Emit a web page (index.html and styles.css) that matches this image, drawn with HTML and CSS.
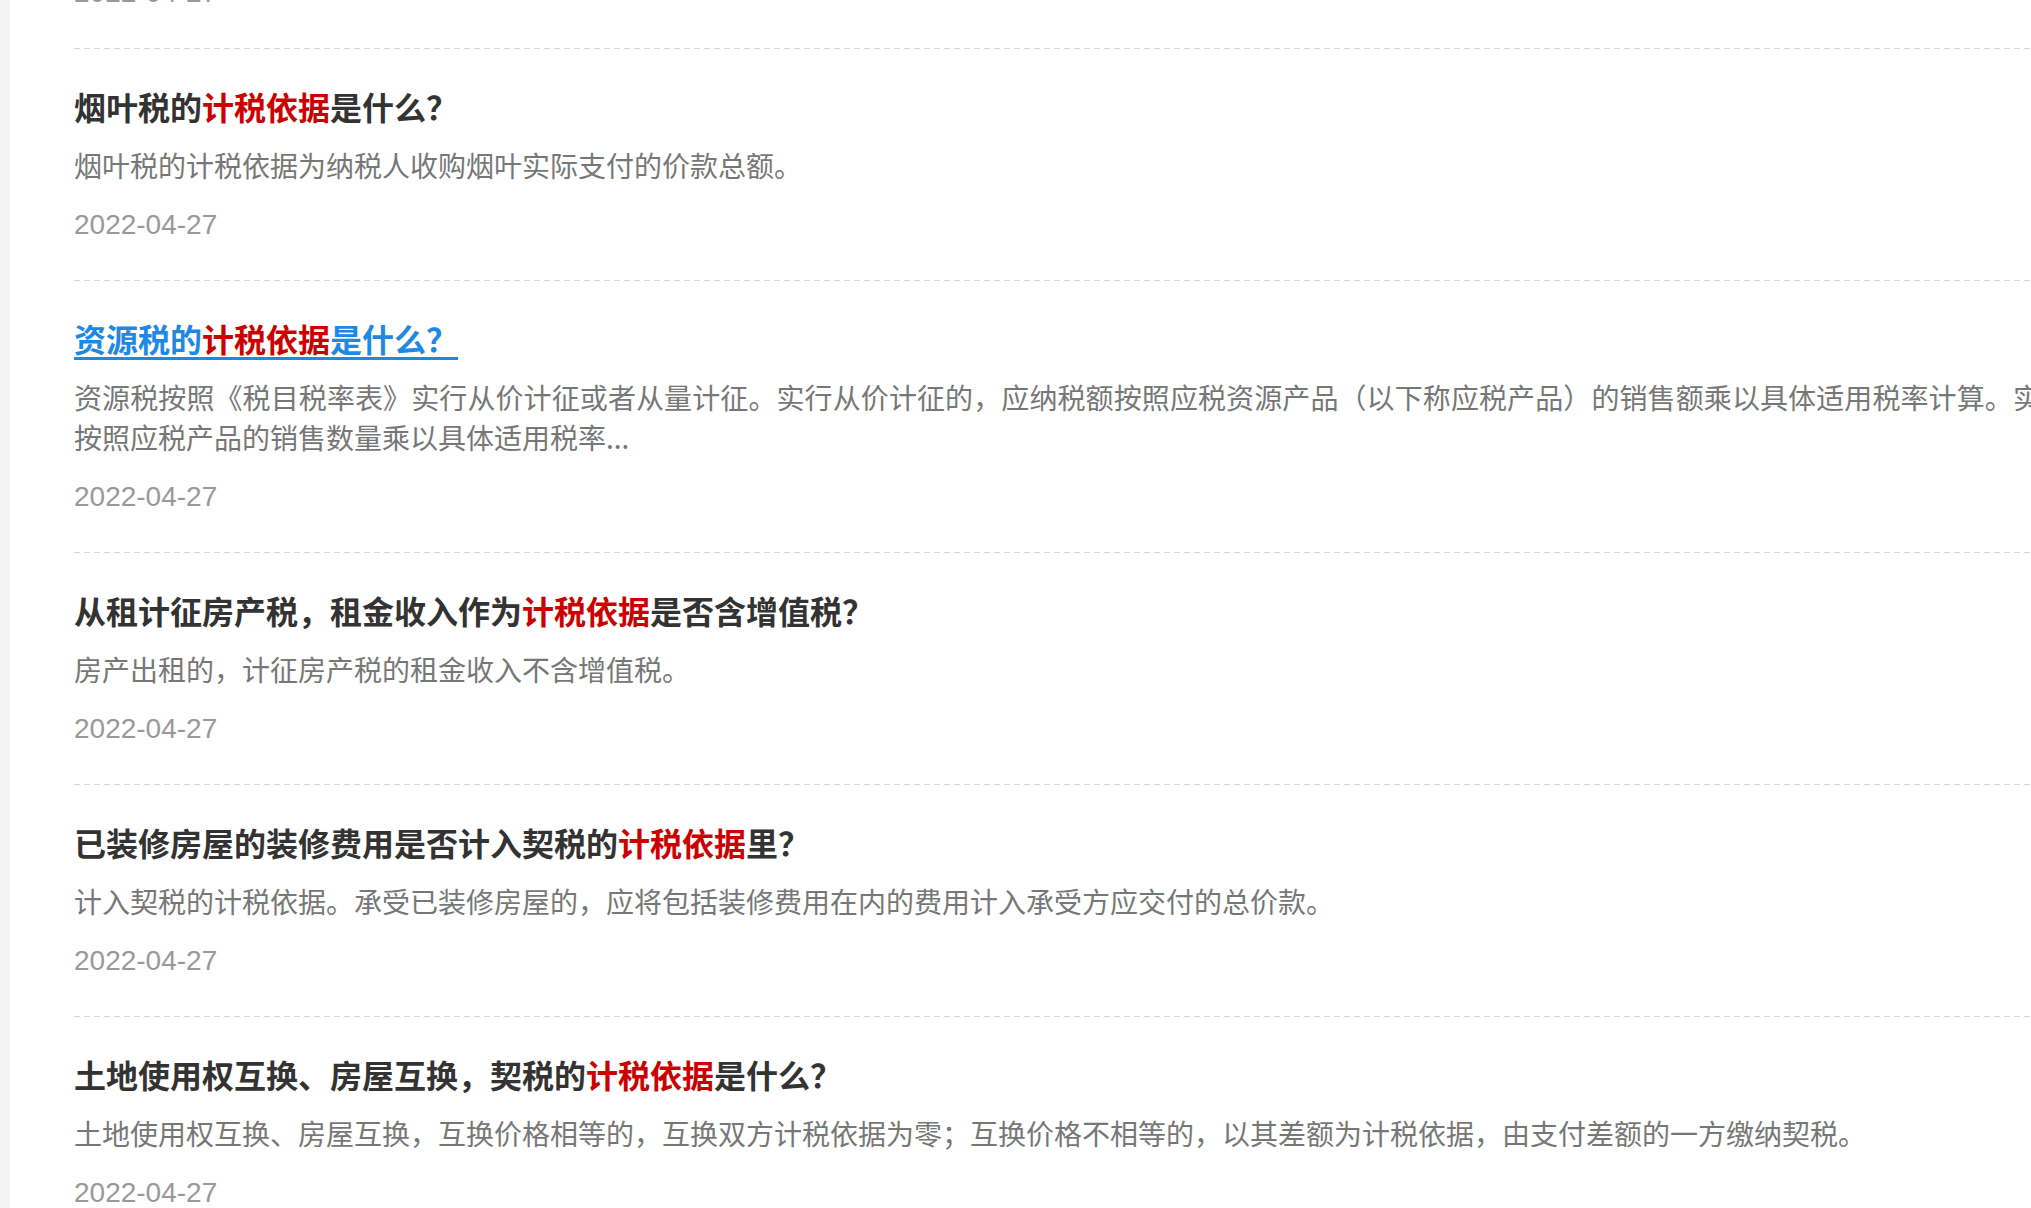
FILE: index.html
```html
<!DOCTYPE html>
<html>
<head>
    <meta charset="utf-8">
    <title>计税依据 - 问答列表</title>
    <link rel="stylesheet" href="styles.css">
</head>
<body>

    <div class="page">
        <div class="side"></div>

        <div class="main">
            <div class="list">

                <!-- tail of the previous item, scrolled off the top -->
                <div class="item cut">
                    <div class="date">2022-04-27</div>
                </div>

                <div class="item">
                    <h3 class="title"><a href="#">烟叶税的<em>计税依据</em>是什么？</a></h3>
                    <p class="desc">烟叶税的计税依据为纳税人收购烟叶实际支付的价款总额。</p>
                    <div class="date">2022-04-27</div>
                </div>

                <div class="item on">
                    <h3 class="title"><a href="#">资源税的<em>计税依据</em>是什么？</a></h3>
                    <p class="desc">资源税按照《税目税率表》实行从价计征或者从量计征。实行从价计征的，应纳税额按照应税资源产品（以下称应税产品）的销售额乘以具体适用税率计算。实行从量计征的，应纳税额按照应税产品的销售数量乘以具体适用税率...</p>
                    <div class="date">2022-04-27</div>
                </div>

                <div class="item">
                    <h3 class="title"><a href="#">从租计征房产税，租金收入作为<em>计税依据</em>是否含增值税？</a></h3>
                    <p class="desc">房产出租的，计征房产税的租金收入不含增值税。</p>
                    <div class="date">2022-04-27</div>
                </div>

                <div class="item">
                    <h3 class="title"><a href="#">已装修房屋的装修费用是否计入契税的<em>计税依据</em>里？</a></h3>
                    <p class="desc">计入契税的计税依据。承受已装修房屋的，应将包括装修费用在内的费用计入承受方应交付的总价款。</p>
                    <div class="date">2022-04-27</div>
                </div>

                <div class="item">
                    <h3 class="title"><a href="#">土地使用权互换、房屋互换，契税的<em>计税依据</em>是什么？</a></h3>
                    <p class="desc">土地使用权互换、房屋互换，互换价格相等的，互换双方计税依据为零；互换价格不相等的，以其差额为计税依据，由支付差额的一方缴纳契税。</p>
                    <div class="date">2022-04-27</div>
                </div>

            </div>
        </div>
    </div>

</body>
</html>
```

FILE: styles.css
```css
html, body {
    margin: 0;
    padding: 0;
    overflow: hidden;
    background: white;
}
body {
    font-family: "Noto Sans CJK SC", "Liberation Sans", sans-serif;
}
.page {
    display: flex;
    min-height: 100vh;
}
.side {
    width: 10px;
    flex-shrink: 0;
    background: #f4f4f4;
}
.main {
    flex: 1;
    min-width: 0;
    padding-left: 64px;
}
.list {
    width: 2276px;
}
.item {
    padding: 35px 0 36px;
    background: repeating-linear-gradient(to right, #d6d6d6 0 6px, transparent 6px 10px) left bottom / 100% 1px no-repeat;
}
.item.cut {
    margin-top: -62px;
}
.title {
    margin: 0;
    font-size: 32px;
    line-height: 44px;
    font-weight: bold;
}
.title a {
    color: #333;
    text-decoration: none;
}
.title em {
    font-style: normal;
    color: #cc0000;
}
.title a:hover,
.item.on .title a {
    color: #1e88e5;
    text-decoration: underline;
    text-decoration-thickness: 3px;
    text-underline-offset: 5px;
}
.desc {
    margin: 17px 0 0;
    font-size: 28px;
    line-height: 40px;
    color: #777;
    text-align: justify;
}
.date {
    margin-top: 20px;
    font-family: "Liberation Sans", Arial, sans-serif;
    font-size: 28px;
    line-height: 40px;
    color: #999;
}
.cut .date {
    margin-top: 0;
}
```
